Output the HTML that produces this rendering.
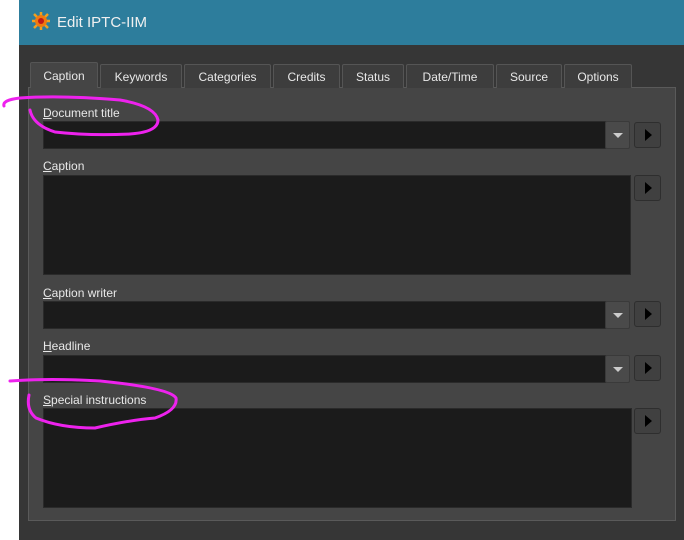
<!DOCTYPE html>
<html><head><style>
*{margin:0;padding:0;box-sizing:border-box}
body{width:684px;height:540px;background:#fff;position:relative;overflow:hidden;font-family:"Liberation Sans",sans-serif;font-size:12px;color:#e8e8e8}
.a{position:absolute}
.win{left:19px;top:0;width:665px;height:540px;background:#363636}
.title{left:19px;top:0;width:665px;height:45px;background:#2d7d9c;color:#f0f0f0;font-size:15px}
.tab{top:64px;height:24px;background:#3d3d3d;border:1px solid #555;border-bottom:none;text-align:center;line-height:24px;border-radius:2px 2px 0 0}
.panel{left:28px;top:87px;width:648px;height:434px;background:#454545;border:1px solid #5a5a5a}
.in{background:#1b1b1b;border:1px solid #2a2a2a}
.dd{background:#4a4a4a;border:1px solid #3a3a3a;border-radius:2px}
.dd:after{content:"";position:absolute;left:7px;top:11px;border-left:5px solid transparent;border-right:5px solid transparent;border-top:5px solid #ccc}
.btn{width:27px;height:26px;background:#404040;border:1px solid #2e2e2e;border-radius:3px}
.btn:after{content:"";position:absolute;left:10px;top:6px;border-top:6px solid transparent;border-bottom:6px solid transparent;border-left:7px solid #000}
.lbl{left:43px}
u{text-decoration:underline}
</style></head><body>
<div class="a win"></div>
<div class="a title"><svg class="a" style="left:12px;top:11px" width="20" height="20" viewBox="0 0 20 20"><g stroke="#f0a020" stroke-width="2.5"><line x1="10" y1="1" x2="10" y2="19"/><line x1="1" y1="10" x2="19" y2="10"/><line x1="3" y1="3" x2="17" y2="17"/><line x1="17" y1="3" x2="3" y2="17"/></g><circle cx="10" cy="10" r="6" fill="#f07a10"/><circle cx="10" cy="10" r="3" fill="#c01818"/></svg><span class="a" style="left:38px;top:14px">Edit IPTC-IIM</span></div>
<div class="a panel"></div>
<div class="a tab" style="left:30px;width:68px;top:62px;height:26px;background:#454545;line-height:26px">Caption</div>
<div class="a tab" style="left:100px;width:82px">Keywords</div>
<div class="a tab" style="left:184px;width:87px">Categories</div>
<div class="a tab" style="left:273px;width:67px">Credits</div>
<div class="a tab" style="left:342px;width:62px">Status</div>
<div class="a tab" style="left:406px;width:88px">Date/Time</div>
<div class="a tab" style="left:496px;width:66px">Source</div>
<div class="a tab" style="left:564px;width:68px">Options</div>

<div class="a lbl" style="top:106px"><u>D</u>ocument title</div>
<div class="a in" style="left:43px;top:121px;width:563px;height:28px"></div>
<div class="a dd" style="left:605px;top:121px;width:25px;height:28px"></div>
<div class="a btn" style="left:634px;top:122px"></div>

<div class="a lbl" style="top:159px"><u>C</u>aption</div>
<div class="a in" style="left:43px;top:175px;width:588px;height:100px"></div>
<div class="a btn" style="left:634px;top:175px"></div>

<div class="a lbl" style="top:286px"><u>C</u>aption writer</div>
<div class="a in" style="left:43px;top:301px;width:563px;height:28px"></div>
<div class="a dd" style="left:605px;top:301px;width:25px;height:28px"></div>
<div class="a btn" style="left:634px;top:301px"></div>

<div class="a lbl" style="top:339px"><u>H</u>eadline</div>
<div class="a in" style="left:43px;top:355px;width:563px;height:28px"></div>
<div class="a dd" style="left:605px;top:355px;width:25px;height:28px"></div>
<div class="a btn" style="left:634px;top:355px"></div>

<div class="a lbl" style="top:393px"><u>S</u>pecial instructions</div>
<div class="a in" style="left:43px;top:408px;width:589px;height:100px"></div>
<div class="a btn" style="left:634px;top:408px"></div>

<svg class="a" style="left:0;top:0" width="684" height="540" fill="none" stroke="#ee22ee" stroke-width="3" stroke-linecap="round">
<path d="M4 106 Q2 100 20 98 Q60 95 120 100 Q155 106 158 120 Q158 132 130 134 Q90 136 55 132 Q33 125 30 110"/>
<path d="M10 381 Q50 378 100 381 Q170 388 176 398 Q178 410 155 418 Q130 420 95 428 Q60 428 36 418 Q26 410 29 395"/>
</svg>
</body></html>
